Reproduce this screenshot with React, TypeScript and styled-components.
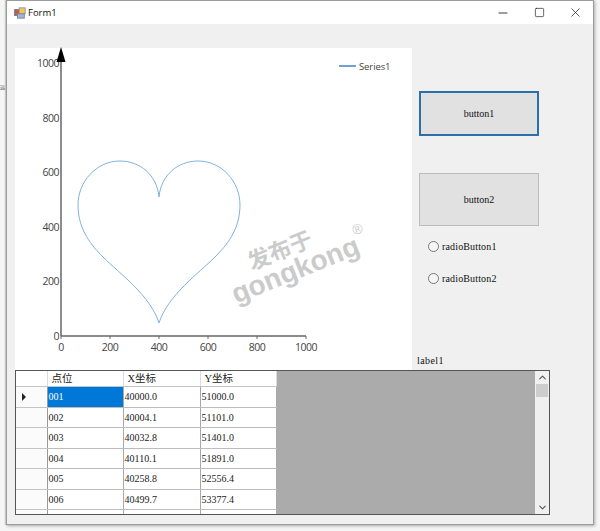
import React from 'react';
import styled, { createGlobalStyle } from 'styled-components';
import { Minus, Square, X, ChevronUp, ChevronDown } from 'lucide-react';

const rows = [
  ['001', '40000.0', '51000.0'],
  ['002', '40004.1', '51101.0'],
  ['003', '40032.8', '51401.0'],
  ['004', '40110.1', '51891.0'],
  ['005', '40258.8', '52556.4'],
  ['006', '40499.7', '53377.4'],
  ['', '', ''],
];

const ticks = [0, 200, 400, 600, 800, 1000];
const CHART_X0 = 46;
const CHART_Y0 = 288;
const SCALE = 0.245;
const YSCALE = 0.273;

export default function App() {
  return (
    <>
      <GlobalStyle />
      <Desktop>
        <BehindChar>远</BehindChar>
        <Window>
          <TitleBar>
            <FormIcon viewBox="0 0 14 14">
              <rect x="0.5" y="3" width="6" height="7" fill="#c9584a" stroke="#7d7d92" />
              <rect x="6" y="1" width="7" height="7" fill="#f2c94c" stroke="#8b8bb0" />
              <rect x="4" y="8" width="8" height="5" fill="#9db7dd" stroke="#7d7d92" />
            </FormIcon>
            <Title>Form1</Title>
            <WindowButtons>
              <WindowButton><Minus size={14} strokeWidth={1.5} /></WindowButton>
              <WindowButton><Square size={11} strokeWidth={1.5} /></WindowButton>
              <WindowButton><X size={15} strokeWidth={1.2} /></WindowButton>
            </WindowButtons>
          </TitleBar>
          <Client>
            <TopRow>
              <ChartPanel>
                <svg width="397" height="322" viewBox="0 0 397 322">
                  <line x1="46" y1="10" x2="46" y2="288" stroke="#666" strokeWidth="1.5" />
                  <line x1="46" y1="288" x2="291" y2="288" stroke="#666" strokeWidth="1.5" />
                  {ticks.map((t) => (
                    <g key={t}>
                      <line
                        x1={CHART_X0 + t * SCALE}
                        x2={CHART_X0 + t * SCALE}
                        y1={CHART_Y0}
                        y2={CHART_Y0 + 3}
                        stroke="#666"
                      />
                      <AxisText x={CHART_X0 + t * SCALE} y={303} textAnchor="middle">
                        {t}
                      </AxisText>
                      <AxisText x={CHART_X0 - 2} y={CHART_Y0 - t * YSCALE + 4} textAnchor="end">
                        {t}
                      </AxisText>
                    </g>
                  ))}
                  <polygon points="46,-1 41.5,14 50.5,14" fill="#000" />
                  <path
                    d="M144 149 C142 127 125 113 105 113 C81 113 63 134 63 157 C63 182 77 198 88 209 C105 226 135 247 144 275 C153 247 183 226 200 209 C211 198 225 182 225 157 C225 134 207 113 183 113 C163 113 146 127 144 149 Z"
                    fill="none"
                    stroke="#7fb2e0"
                    strokeWidth="1"
                  />
                  <line x1="324" y1="18" x2="341" y2="18" stroke="#3f83c0" strokeWidth="1.5" />
                  <LegendText x="344" y="22">Series1</LegendText>
                </svg>
                <Watermark>
                  <WatermarkCn>发布于</WatermarkCn>
                  <WatermarkEn>gongkong<Registered>®</Registered></WatermarkEn>
                </Watermark>
              </ChartPanel>
              <SidePanel>
                <ActionButton $focused>button1</ActionButton>
                <ActionButton>button2</ActionButton>
                <RadioRow><RadioCircle />radioButton1</RadioRow>
                <RadioRow><RadioCircle />radioButton2</RadioRow>
                <FormLabel>label1</FormLabel>
              </SidePanel>
            </TopRow>
            <GridView>
              <GridBody>
                <Table>
                  <colgroup>
                    <col style={{ width: 31 }} />
                    <col style={{ width: 76 }} />
                    <col style={{ width: 77 }} />
                    <col style={{ width: 76 }} />
                  </colgroup>
                  <thead>
                    <tr>
                      <HeaderCell />
                      <HeaderCell>点位</HeaderCell>
                      <HeaderCell>X坐标</HeaderCell>
                      <HeaderCell>Y坐标</HeaderCell>
                    </tr>
                  </thead>
                  <tbody>
                    {rows.map((row, i) => (
                      <tr key={i}>
                        <RowHeader>{i === 0 && <RowPointer />}</RowHeader>
                        {row.map((value, j) => (
                          <Cell key={j} $selected={i === 0 && j === 0}>{value}</Cell>
                        ))}
                      </tr>
                    ))}
                  </tbody>
                </Table>
              </GridBody>
              <ScrollBar>
                <ScrollArrow><ChevronUp size={11} strokeWidth={2.4} /></ScrollArrow>
                <ScrollThumb />
                <ScrollSpacer />
                <ScrollArrow><ChevronDown size={11} strokeWidth={2.4} /></ScrollArrow>
              </ScrollBar>
            </GridView>
          </Client>
        </Window>
      </Desktop>
    </>
  );
}

const GlobalStyle = createGlobalStyle`
  html, body {
    margin: 0;
    padding: 0;
    background: #f6f6f6;
  }
`;

const Desktop = styled.div`
  position: relative;
  width: 600px;
  height: 531px;
  overflow: hidden;
  padding: 0 6px 6px 6px;
  box-sizing: border-box;
  background: #f5f5f5;
`;

const BehindChar = styled.span`
  position: absolute;
  left: 0;
  top: 83px;
  font: 5px/8px "Noto Sans CJK SC", sans-serif;
  color: #444;
`;

const Window = styled.div`
  position: relative;
  width: 588px;
  height: 525px;
  box-sizing: border-box;
  border: 1px solid #9c9c9c;
  background: #f0f0f0;
  box-shadow: 1px 1px 3px rgba(0, 0, 0, 0.3), -1px 0 1px rgba(0, 0, 0, 0.15);
  display: flex;
  flex-direction: column;
`;

const TitleBar = styled.div`
  height: 23px;
  flex: none;
  background: #fff;
  display: flex;
  align-items: center;
  padding-left: 7px;
`;

const FormIcon = styled.svg`
  width: 12px;
  height: 12px;
  margin-right: 2px;
`;

const Title = styled.span`
  font: 9.5px "Open Sans", sans-serif;
  color: #111;
  flex: 1;
`;

const WindowButtons = styled.div`
  display: flex;
  padding-left: 1px;
`;

const WindowButton = styled.div`
  width: 36px;
  height: 23px;
  display: flex;
  align-items: center;
  justify-content: center;
  color: #222;
`;

const Client = styled.div`
  flex: 1;
  padding: 24px 0 0 8px;
  display: flex;
  flex-direction: column;
`;

const TopRow = styled.div`
  display: flex;
  height: 322px;
`;

const ChartPanel = styled.div`
  position: relative;
  width: 397px;
  height: 322px;
  background: #fff;
  flex: none;

  svg {
    overflow: visible;
  }
`;

const AxisText = styled.text`
  font: 10.5px "Open Sans", sans-serif;
  letter-spacing: -0.5px;
  fill: #444;
`;

const LegendText = styled.text`
  font: 9.5px "Open Sans", sans-serif;
  letter-spacing: -0.1px;
  fill: #444;
`;

const Watermark = styled.div`
  position: absolute;
  left: 206px;
  top: 186px;
  width: 140px;
  transform: rotate(-22deg);
  color: #cbcbcb;
  text-align: center;
  font-family: "Liberation Sans", sans-serif;
  font-weight: 700;
`;

const WatermarkCn = styled.div`
  font: 700 22.5px/23px "Noto Sans CJK SC", sans-serif;
  margin-right: 14px;
`;

const WatermarkEn = styled.div`
  position: relative;
  font-size: 28px;
  line-height: 27px;
`;

const Registered = styled.span`
  position: absolute;
  right: -8px;
  top: -14px;
  font-size: 14px;
  font-weight: 400;
`;

const SidePanel = styled.div`
  flex: 1;
  padding: 43px 0 0 7px;
  display: flex;
  flex-direction: column;
  align-items: flex-start;
`;

const ActionButton = styled.div<{ $focused?: boolean }>`
  width: 120px;
  height: ${({ $focused }) => ($focused ? 45 : 53)}px;
  margin-bottom: ${({ $focused }) => ($focused ? 37 : 12)}px;
  box-sizing: border-box;
  border: ${({ $focused }) => ($focused ? '2.5px solid #2b70ab' : '1.5px solid #bcbcbc')};
  background: #e1e1e1;
  display: flex;
  align-items: center;
  justify-content: center;
  font: 10px "Liberation Serif", serif;
  color: #111;
`;

const RadioRow = styled.div`
  display: flex;
  align-items: center;
  height: 16px;
  margin: 0 0 16px 9px;
  font: 10px "Liberation Serif", serif;
  letter-spacing: 0.15px;
  color: #111;
`;

const RadioCircle = styled.span`
  width: 9px;
  height: 9px;
  margin-right: 3px;
  border: 1px solid #777;
  border-radius: 50%;
  background: #f6f6f6;
`;

const FormLabel = styled.div`
  margin: auto 0 3px -2px;
  font: 10px/12px "Liberation Serif", serif;
  letter-spacing: 0.4px;
  color: #111;
`;

const GridView = styled.div`
  width: 535px;
  height: 145px;
  box-sizing: border-box;
  border: 1.5px solid #555;
  background: #ababab;
  display: flex;
  overflow: hidden;
`;

const GridBody = styled.div`
  flex: 1;
  overflow: hidden;
`;

const Table = styled.table`
  width: 260px;
  table-layout: fixed;
  border-collapse: collapse;
  background: #fff;
`;

const HeaderCell = styled.th`
  height: 15px;
  padding: 0 0 0 4px;
  border-right: 1px solid #dcdcdc;
  border-bottom: 1px solid #c4c4c4;
  background: #fff;
  text-align: left;
  font: 400 10.5px/14px "Liberation Serif", "Noto Sans CJK SC", serif;
  color: #222;
`;

const RowHeader = styled.td`
  height: 19.5px;
  padding: 0;
  border-right: 1px solid #999;
  border-bottom: 1px solid #c4c4c4;
  background: #fbfbfb;
`;

const RowPointer = styled.span`
  display: block;
  width: 0;
  height: 0;
  margin-left: 6px;
  border-left: 4px solid #222;
  border-top: 4px solid transparent;
  border-bottom: 4px solid transparent;
`;

const Cell = styled.td<{ $selected?: boolean }>`
  height: 19.5px;
  padding: 0 0 0 1px;
  border-right: 1px solid #a8a8a8;
  border-bottom: 1px solid #bcbcbc;
  background: ${({ $selected }) => ($selected ? '#0078d7' : '#fff')};
  color: ${({ $selected }) => ($selected ? '#fff' : '#222')};
  font: 10px "Liberation Serif", serif;
`;

const ScrollBar = styled.div`
  width: 14px;
  flex: none;
  background: #f0f0f0;
  display: flex;
  flex-direction: column;
`;

const ScrollArrow = styled.div`
  height: 13px;
  flex: none;
  display: flex;
  align-items: center;
  justify-content: center;
  color: #555;
`;

const ScrollThumb = styled.div`
  height: 13px;
  flex: none;
  margin: 0 1px;
  background: #cdcdcd;
`;

const ScrollSpacer = styled.div`
  flex: 1;
`;
